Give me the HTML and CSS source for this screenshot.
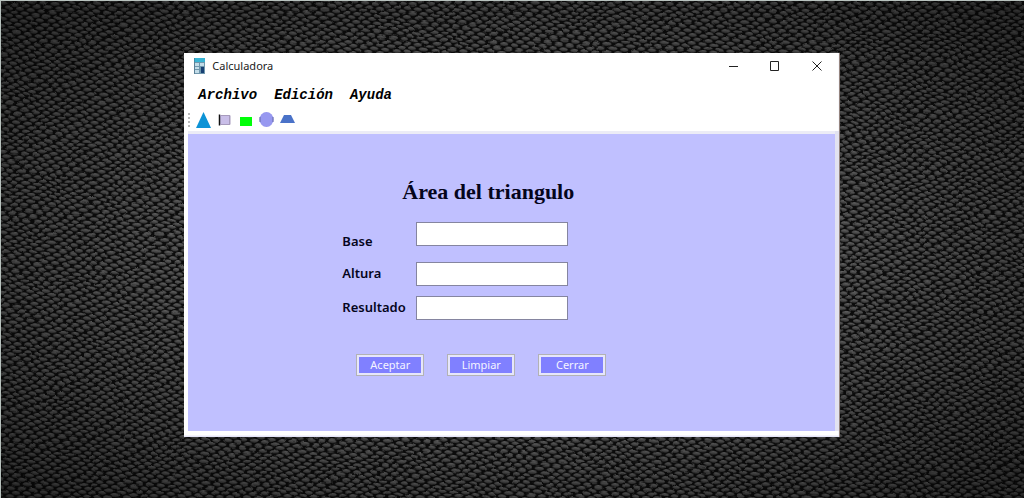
FILE: index.html
```html
<!DOCTYPE html>
<html lang="es">
<head>
<meta charset="utf-8">
<title>Calculadora</title>
<link rel="stylesheet" href="styles.css">
</head>
<body>
<svg class="wallpaper" aria-hidden="true">
  <defs>
    <linearGradient id="scale" x1="0" y1="0" x2="0" y2="1">
      <stop offset="0" stop-color="#747474"/>
      <stop offset="0.5" stop-color="#525252"/>
      <stop offset="1" stop-color="#343434"/>
    </linearGradient>
    <pattern id="scales" width="11" height="8" patternUnits="userSpaceOnUse" patternTransform="rotate(7)">
      <rect width="11" height="8" fill="#080808"/>
      <g fill="url(#scale)">
        <path id="s" d="M1 4Q3 2 5 2Q9 2 10 4Q8 6 6 6Q2 6 1 4Z"/>
        <use href="#s" x="-5.500" y="-4"/><use href="#s" x="5.500" y="-4"/>
        <use href="#s" x="-5.500" y="4"/><use href="#s" x="5.500" y="4"/>
      </g>
    </pattern>
    <filter id="uneven" x="0" y="0" width="100%" height="100%">
      <feTurbulence type="fractalNoise" baseFrequency="0.03 0.04" numOctaves="2" seed="4"/>
      <feDisplacementMap in="SourceGraphic" scale="7" xChannelSelector="R" yChannelSelector="G"/>
    </filter>
    <radialGradient id="shade" cx="0.5" cy="0.5" r="0.7">
      <stop offset="0.4" stop-color="#000" stop-opacity="0"/>
      <stop offset="1" stop-color="#000" stop-opacity="0.5"/>
    </radialGradient>
  </defs>
  <svg x="-12" y="-12" width="110%" height="110%"><rect width="100%" height="100%" fill="url(#scales)" filter="url(#uneven)"/></svg>
  <rect width="100%" height="100%" fill="url(#shade)"/>
</svg>
<main class="window">
  <header class="titlebar">
    <svg class="app-icon" viewBox="0 0 11 16" aria-hidden="true">
      <rect width="11" height="16" fill="#6f97ad"/>
      <rect width="11" height="4" fill="#38b4d4"/>
      <path d="M1 5h4v3H1zM6 5h4v3H6zM1 9h4v2H1zM1 12h4v3H1z" fill="#c2dce8"/>
      <rect x="7" y="9" width="3" height="6" fill="#173f72"/>
      <path d="M0 0v16" stroke="#466b80"/>
    </svg>
    <span class="caption">Calculadora</span>
    <button class="control" aria-label="Minimizar"><svg viewBox="0 0 10 10"><path d="M1 5.500h9"/></svg></button>
    <button class="control" aria-label="Maximizar"><svg viewBox="0 0 10 10"><path d="M.5.500h8v9h-8z"/></svg></button>
    <button class="control" aria-label="Cerrar ventana"><svg viewBox="0 0 10 10"><path d="M.5.500l9 9M9.500.500l-9 9"/></svg></button>
  </header>
  <nav class="menu">
    <button class="menu-item">Archivo</button>
    <button class="menu-item">Edición</button>
    <button class="menu-item">Ayuda</button>
  </nav>
  <div class="toolbar">
    <span class="grip"></span>
    <button class="tool" aria-label="Triángulo"><svg viewBox="0 0 15 16"><path d="M7.500 0L15 16H0z" fill="#0d93d6"/></svg></button>
    <button class="tool" aria-label="Cuadrado"><svg viewBox="0 0 15 16"><path d="M2 3h11v10H2z" fill="#c9bee8"/><path d="M2.500 2.500v11" stroke="#111" stroke-width="1.500"/><path d="M3 3.500h10v9H3M12.500 3v10" fill="none" stroke="#a79bbd"/></svg></button>
    <button class="tool" aria-label="Rectángulo"><svg viewBox="0 0 15 16"><path d="M2 5h12v9H2z" fill="#00ff08"/></svg></button>
    <button class="tool" aria-label="Círculo"><svg viewBox="0 0 15 16"><ellipse cx="7.500" cy="7.500" rx="7" ry="7.500" fill="#9798f0"/><path d="M1 5v5M14 5v5" stroke="#6268a6"/></svg></button>
    <button class="tool" aria-label="Trapecio"><svg viewBox="0 0 15 16"><path d="M4 3h7l4 8H0z" fill="#4a72c8"/></svg></button>
  </div>
  <form class="panel">
    <h1 class="title">Área del triangulo</h1>
    <div class="fields">
      <label class="label label-first" for="base">Base</label><input class="field" id="base" type="text">
      <label class="label" for="altura">Altura</label><input class="field" id="altura" type="text">
      <label class="label" for="resultado">Resultado</label><input class="field" id="resultado" type="text">
    </div>
    <div class="actions">
      <button class="action" type="button">Aceptar</button>
      <button class="action" type="button">Limpiar</button>
      <button class="action" type="button">Cerrar</button>
    </div>
  </form>
</main>
</body>
</html>
```
FILE: styles.css
```css
* {
  box-sizing: border-box;
}

body {
  position: relative;
  z-index: 0;
  min-height: 100vh;
  margin: 0;
  padding: 53px 18% 0;
  overflow: hidden;
  background: #161616;
  box-shadow: inset 1px 1px #b8c2be;
  font-family: "Noto Sans", sans-serif;
}

button {
  padding: 0;
  border: 0;
  background: none;
  color: inherit;
  font: inherit;
}

.wallpaper {
  position: absolute;
  z-index: -1;
  inset: 1px 0 0 1px;
  width: 100%;
  height: 100%;
}

.window {
  padding: 0 4px 6px;
  border-right: 1px solid #94847e;
  background: linear-gradient(#fff, #fff) top / 100% 78px no-repeat,
    linear-gradient(#fff 60%, #dedef4) bottom / 100% 6px no-repeat,
    linear-gradient(90deg, #fff 50%, #e2e2f0);
}

.titlebar {
  display: flex;
  align-items: center;
  height: 26px;
  padding: 0 13px 0 6px;
}

.app-icon {
  width: 11px;
  height: 16px;
}

.caption {
  flex: 1;
  padding-left: 7px;
  color: #222;
  font-size: 11px;
  line-height: 14px;
}

.control {
  display: flex;
  align-items: center;
  justify-content: flex-end;
  width: 42px;
  height: 24px;
}

.control svg {
  width: 10px;
  height: 10px;
  fill: none;
  stroke: #222;
}

.menu {
  display: flex;
  align-items: center;
  gap: 17px;
  height: 32px;
  padding-left: 10px;
  color: #000;
  font: italic bold 14px "Liberation Mono", monospace;
}

.toolbar {
  display: flex;
  align-items: center;
  gap: 6px;
  height: 18px;
  margin-bottom: 5px;
}

.grip {
  width: 2px;
  height: 14px;
  background: repeating-linear-gradient(#bbb 0 2px, transparent 2px 4px);
}

.tool,
.tool svg {
  display: block;
  width: 15px;
  height: 16px;
}

.panel {
  padding: 44px 0 55px 154px;
  background: #c0c0ff;
  box-shadow: 0 -3px #ececf6;
}

.title {
  margin: 0 0 16px;
  padding-left: 60px;
  color: #05051c;
  font: bold 22px/28px "Liberation Serif", serif;
}

.fields {
  display: grid;
  grid-template-columns: 74px 152px;
  grid-template-rows: 40px 34px auto;
  align-items: start;
}

.label {
  color: #05051c;
  font-size: 13px;
  font-weight: 600;
  line-height: 22px;
}

.label-first {
  padding-top: 8px;
}

.field {
  width: 100%;
  height: 24px;
  padding: 0 4px;
  border: 1px solid #8585a0;
  background: #fff;
  font: 13px "Noto Sans", sans-serif;
}

.actions {
  display: flex;
  gap: 23px;
  padding: 34px 0 0 14px;
}

.action {
  width: 68px;
  height: 22px;
  border: 1px solid #b2b2b4;
  background: #8080ff;
  box-shadow: inset 0 0 0 2px #e6e6fa;
  color: #f4f4ff;
  font-size: 11px;
  line-height: 20px;
}
```
